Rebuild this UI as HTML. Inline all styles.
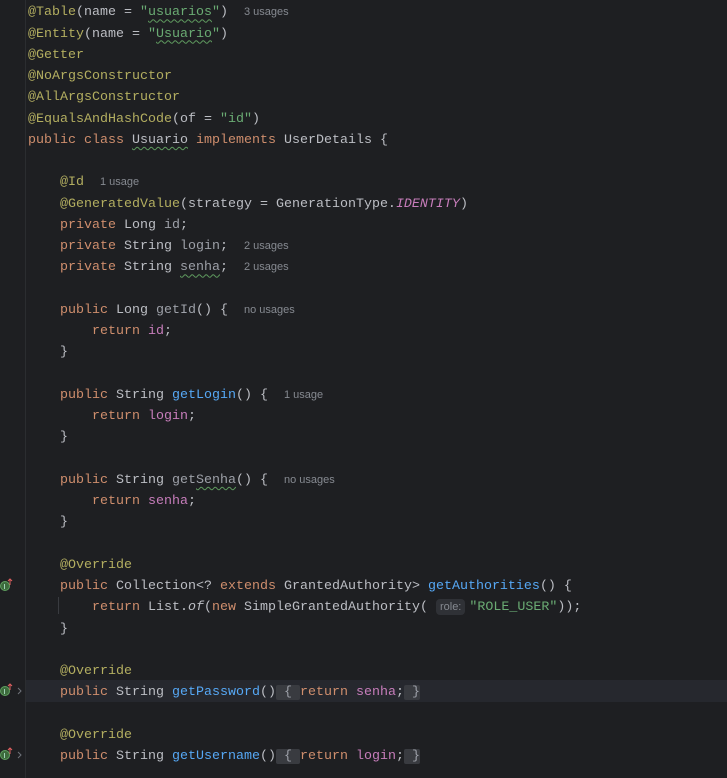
<!DOCTYPE html>
<html><head><meta charset="utf-8"><style>
html,body{margin:0;padding:0;background:#1e1f22;width:727px;height:778px;overflow:hidden}
.g{position:absolute;left:25px;top:0;width:1px;height:778px;background:#2b2d30}
.cur{position:absolute;left:26px;top:680px;width:701px;height:22px;background:#26282e}
.l{position:absolute;left:28px;height:21.25px;line-height:21.25px;font-family:"Liberation Mono",monospace;font-size:13.33px;color:#bcbec4;white-space:pre}
.k{color:#cf8e6d}.a{color:#b3ae60}.s{color:#6aab73}.f{color:#c77dbb}.m{color:#56a8f5}.v{color:#9da0a8}
.i{font-style:italic}.p{color:#c77dbb;font-style:italic}
.w{text-decoration:underline wavy #5f9b5f;text-underline-offset:3px;text-decoration-thickness:1px}
.h{font-family:"Liberation Sans",sans-serif;font-size:11px;color:#868a91}
.hb{font-family:"Liberation Sans",sans-serif;font-size:11px;color:#868a91;background:#2f3136;border-radius:4px;padding:2px 4px;margin-right:4px}
.fb{background:#393b40;border-radius:2px;color:#9da0a8}
.ic{position:absolute;left:0px}
</style></head><body>
<div class="g"></div>
<div class="cur"></div>
<div class="l" style="top:2.4px"><span class="a">@Table</span>(name = <span class="s">"<span class="w">usuarios</span>"</span>)  <span class="h">3 usages</span></div>
<div class="l" style="top:23.65px"><span class="a">@Entity</span>(name = <span class="s">"<span class="w">Usuario</span>"</span>)</div>
<div class="l" style="top:44.9px"><span class="a">@Getter</span></div>
<div class="l" style="top:66.15px"><span class="a">@NoArgsConstructor</span></div>
<div class="l" style="top:87.4px"><span class="a">@AllArgsConstructor</span></div>
<div class="l" style="top:108.65px"><span class="a">@EqualsAndHashCode</span>(of = <span class="s">"id"</span>)</div>
<div class="l" style="top:129.9px"><span class="k">public class </span><span class="w">Usuario</span><span class="k"> implements </span>UserDetails {</div>
<div class="l" style="top:172.4px">    <span class="a">@Id</span>  <span class="h">1 usage</span></div>
<div class="l" style="top:193.65px">    <span class="a">@GeneratedValue</span>(strategy = GenerationType.<span class="p">IDENTITY</span>)</div>
<div class="l" style="top:214.9px">    <span class="k">private </span>Long <span class="v">id</span>;</div>
<div class="l" style="top:236.15px">    <span class="k">private </span>String <span class="v">login</span>;  <span class="h">2 usages</span></div>
<div class="l" style="top:257.4px">    <span class="k">private </span>String <span class="v w">senha</span>;  <span class="h">2 usages</span></div>
<div class="l" style="top:299.9px">    <span class="k">public </span>Long <span class="v">getId</span>() {  <span class="h">no usages</span></div>
<div class="l" style="top:321.15px">        <span class="k">return </span><span class="f">id</span>;</div>
<div class="l" style="top:342.4px">    }</div>
<div class="l" style="top:384.9px">    <span class="k">public </span>String <span class="m">getLogin</span>() {  <span class="h">1 usage</span></div>
<div class="l" style="top:406.15px">        <span class="k">return </span><span class="f">login</span>;</div>
<div class="l" style="top:427.4px">    }</div>
<div class="l" style="top:469.9px">    <span class="k">public </span>String <span class="v">get<span class="w">Senha</span></span>() {  <span class="h">no usages</span></div>
<div class="l" style="top:491.15px">        <span class="k">return </span><span class="f">senha</span>;</div>
<div class="l" style="top:512.4px">    }</div>
<div class="l" style="top:554.9px">    <span class="a">@Override</span></div>
<div class="l" style="top:576.15px">    <span class="k">public </span>Collection&lt;? <span class="k">extends </span>GrantedAuthority&gt; <span class="m">getAuthorities</span>() {</div>
<div class="l" style="top:597.4px">        <span class="k">return </span>List.<span class="i">of</span>(<span class="k">new </span>SimpleGrantedAuthority( <span class="hb">role:</span><span class="s">"ROLE_USER"</span>));</div>
<div class="l" style="top:618.65px">    }</div>
<div class="l" style="top:661.15px">    <span class="a">@Override</span></div>
<div class="l" style="top:682.4px">    <span class="k">public </span>String <span class="m">getPassword</span>()<span class="fb"> { </span><span class="k">return </span><span class="f">senha</span>;<span class="fb"> }</span></div>
<div class="l" style="top:724.9px">    <span class="a">@Override</span></div>
<div class="l" style="top:746.15px">    <span class="k">public </span>String <span class="m">getUsername</span>()<span class="fb"> { </span><span class="k">return </span><span class="f">login</span>;<span class="fb"> }</span></div>
<div style="position:absolute;left:58px;top:597px;width:1px;height:17px;background:#393b40"></div>
<svg class="ic" style="top:577px" width="14" height="16"><circle cx="5" cy="9" r="4.5" fill="#3d6b3d" stroke="#5fa05f"/><text x="3.5" y="12" font-size="7" fill="#cfe" font-family="Liberation Sans">I</text><path d="M10 8V2M8 4l2-2 2 2" stroke="#e06060" fill="none"/></svg>
<svg class="ic" style="top:682px" width="24" height="16"><circle cx="5" cy="9" r="4.5" fill="#3d6b3d" stroke="#5fa05f"/><text x="3.5" y="12" font-size="7" fill="#cfe" font-family="Liberation Sans">I</text><path d="M10 8V2M8 4l2-2 2 2" stroke="#e06060" fill="none"/><path d="M18 6l3 3-3 3" stroke="#6f737a" fill="none"/></svg>
<svg class="ic" style="top:746px" width="24" height="16"><circle cx="5" cy="9" r="4.5" fill="#3d6b3d" stroke="#5fa05f"/><text x="3.5" y="12" font-size="7" fill="#cfe" font-family="Liberation Sans">I</text><path d="M10 8V2M8 4l2-2 2 2" stroke="#e06060" fill="none"/><path d="M18 6l3 3-3 3" stroke="#6f737a" fill="none"/></svg>
</body></html>
